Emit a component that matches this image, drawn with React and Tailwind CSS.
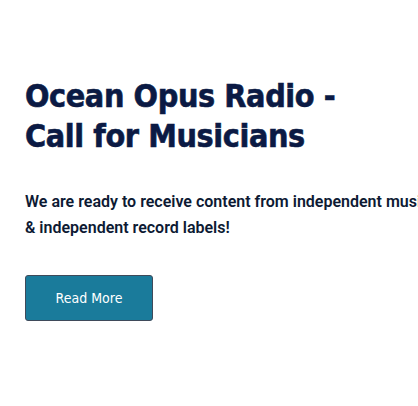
import React from 'react';

const App = () => (
  <div className="w-[418px] h-[406px] overflow-hidden bg-white">
    <div className="w-[700px] pl-[25px] pt-[76px]">
      <h1 className="font-['DejaVu_Sans_Condensed','DejaVu_Sans',sans-serif] text-[32px] leading-[40px] font-bold text-[#0b1a44] tracking-[-0.4px] [-webkit-text-stroke:0.6px_#0b1a44]">
        Ocean Opus Radio -
        <br />
        Call for Musicians
      </h1>
      <p className="mt-[33px] w-[440px] font-['Roboto',sans-serif] text-[16px] leading-[26px] font-semibold text-[#0d1a33]">
        We are ready to receive content from independent musicians &amp; independent record labels!
      </p>
      <button className="mt-[34px] w-[128px] h-[46px] bg-[#1a7b9b] border border-[#3f4a5a] rounded-[3px] text-white text-[14px] font-['DejaVu_Sans_Condensed','DejaVu_Sans',sans-serif]">
        Read More
      </button>
    </div>
  </div>
);

export default App;
